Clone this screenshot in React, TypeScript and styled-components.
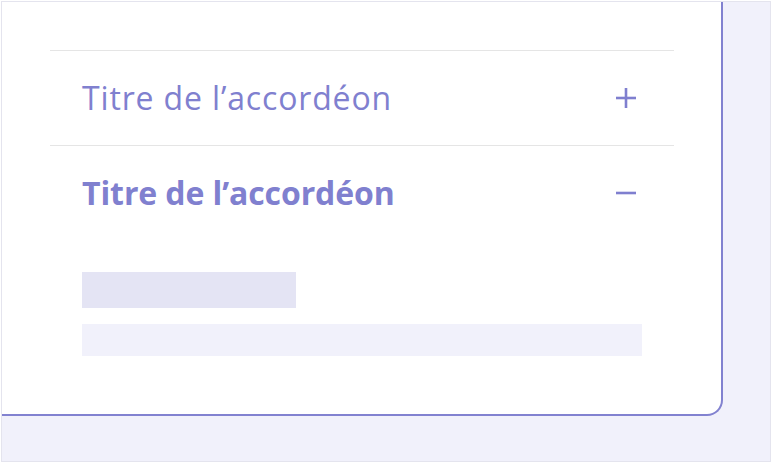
import React, { useState } from "react";
import styled, { createGlobalStyle } from "styled-components";

const Global = createGlobalStyle`
  html, body { margin: 0; padding: 0; background: #ffffff; }
  #root { padding: 1px 0 0 1px; }
`;

const Frame = styled.div`
  box-sizing: border-box;
  width: 770px;
  height: 461px;
  border: 1px solid #e4e4ee;
  background: #f1f1fb;
`;

const Card = styled.div`
  box-sizing: border-box;
  width: 721px;
  height: 414px;
  background: #ffffff;
  border-right: 2px solid #8282d0;
  border-bottom: 2px solid #8282d0;
  border-bottom-right-radius: 16px;
  padding: 48px 47px 0 48px;
`;

const Item = styled.section`
  border-top: 1px solid #e5e5e5;
`;

const Header = styled.button<{ $open?: boolean }>`
  all: unset;
  box-sizing: border-box;
  width: 100%;
  height: 94px;
  display: flex;
  align-items: center;
  justify-content: space-between;
  padding: 0 38px 0 32px;
  cursor: pointer;
  font-family: "Open Sans", "Noto Sans", sans-serif;
  font-size: 32px;
  line-height: 40px;
  letter-spacing: ${(p) => (p.$open ? "-0.1px" : "0.85px")};
  font-weight: ${(p) => (p.$open ? 700 : 400)};
  color: #8080cf;
`;

const Title = styled.span`
  display: block;
`;

const IconBox = styled.svg`
  display: block;
  flex: none;
`;

const Panel = styled.div`
  display: flex;
  flex-direction: column;
  gap: 16px;
  padding: 32px 32px 0 32px;
`;

const Skeleton = styled.div<{ $w: number; $h: number; $tone: "dark" | "light" }>`
  width: ${(p) => p.$w}px;
  height: ${(p) => p.$h}px;
  background: ${(p) => (p.$tone === "dark" ? "#e4e4f4" : "#f1f1fb")};
`;

const Icon = ({ open }: { open: boolean }) => (
  <IconBox width="20" height="20" viewBox="0 0 20 20" fill="none">
    <path d="M0 10H20" stroke="#7f7fcf" strokeWidth="2.6" />
    {!open && <path d="M10 0V20" stroke="#7f7fcf" strokeWidth="2.6" />}
  </IconBox>
);

export default function App() {
  const [open, setOpen] = useState(1);
  const items = ["Titre de l’accordéon", "Titre de l’accordéon"];
  return (
    <>
      <Global />
      <Frame>
        <Card>
          {items.map((t, i) => (
            <Item key={i}>
              <Header $open={open === i} onClick={() => setOpen(open === i ? -1 : i)}>
                <Title>{t}</Title>
                <Icon open={open === i} />
              </Header>
              {open === i && (
                <Panel>
                  <Skeleton $w={214} $h={36} $tone="dark" />
                  <Skeleton $w={560} $h={32} $tone="light" />
                </Panel>
              )}
            </Item>
          ))}
        </Card>
      </Frame>
    </>
  );
}
